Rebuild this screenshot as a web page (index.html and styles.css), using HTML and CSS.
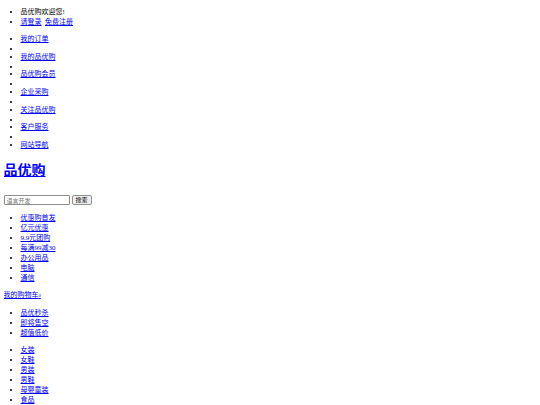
FILE: index.html
```html
<!DOCTYPE html>
<html lang="zh-CN">

<head>
  <meta charset="UTF-8">
  <title>品优购</title>
  <link rel="stylesheet" href="styles.css">
</head>

<body>
  <div class="shortcut">
    <ul class="fl">
      <li>品优购欢迎您!</li>
      <li><a href="#">请登录</a> &nbsp;<a href="#">免费注册</a></li>
    </ul>
    <ul class="fr">
      <li><a href="#">我的订单</a></li>
      <li></li>
      <li><a href="#">我的品优购</a></li>
      <li></li>
      <li><a href="#">品优购会员</a></li>
      <li></li>
      <li><a href="#">企业采购</a></li>
      <li></li>
      <li><a href="#">关注品优购</a></li>
      <li></li>
      <li><a href="#">客户服务</a></li>
      <li></li>
      <li><a href="#">网站导航</a></li>
    </ul>
  </div>

  <div class="header">
    <div class="logo">
      <h1><a href="#">品优购</a></h1>
    </div>
    <div class="search">
      <input type="search" placeholder="语言开发">
      <button>搜索</button>
    </div>
    <ul class="hotwords">
      <li><a href="#">优惠购首发</a></li>
      <li><a href="#">亿元优惠</a></li>
      <li><a href="#">9.9元团购</a></li>
      <li><a href="#">每满99减30</a></li>
      <li><a href="#">办公用品</a></li>
      <li><a href="#">电脑</a></li>
      <li><a href="#">通信</a></li>
    </ul>
    <div class="shopcar">
      <a href="#">我的购物车<i class="count">0</i></a>
    </div>
  </div>

  <div class="nav">
    <ul class="dropdown">
      <li><a href="#">品优秒杀</a></li>
      <li><a href="#">即将售空</a></li>
      <li><a href="#">超值低价</a></li>
    </ul>
    <ul class="navitems">
      <li><a href="#">女装</a></li>
      <li><a href="#">女鞋</a></li>
      <li><a href="#">男装</a></li>
      <li><a href="#">男鞋</a></li>
      <li><a href="#">母婴童装</a></li>
      <li><a href="#">食品</a></li>
      <li><a href="#">家电</a></li>
      <li><a href="#">手机</a></li>
    </ul>
  </div>
</body>

</html>
```

FILE: styles.css
```css
body {
  margin: 0 3.5px;
  font-family: "Liberation Serif", "Noto Sans CJK SC", serif;
  font-size: 7px;
  line-height: 10px;
  color: #000;
}

ul {
  margin: 7px 0;
  padding-left: 17px;
}

li:empty {
  height: 7.7px;
}

a {
  color: #0000ee;
}

.logo h1 {
  font-size: 14px;
  line-height: 20px;
  margin: 11px 0 14px;
}

.search {
  display: flex;
  align-items: center;
  gap: 2px;
  height: 10px;
}

.search input {
  box-sizing: border-box;
  width: 66px;
  height: 10px;
  padding: 0 2px;
  font-size: 6px;
  border: 1px solid #8f8f8f;
  border-radius: 1px;
  font-family: "Noto Sans CJK SC", sans-serif;
}

.search input::placeholder {
  color: #757575;
}

.search button {
  box-sizing: border-box;
  height: 10px;
  padding: 0 3px;
  font-size: 6px;
  line-height: 8px;
  border: 1px solid #8f8f8f;
  border-radius: 2px;
  background: #efefef;
  color: #000;
  font-family: "Noto Sans CJK SC", sans-serif;
}

.hotwords {
  margin-top: 8px;
}

.shopcar {
  height: 11px;
  line-height: 11px;
}

.count {
  font-size: 4.5px;
}
```
